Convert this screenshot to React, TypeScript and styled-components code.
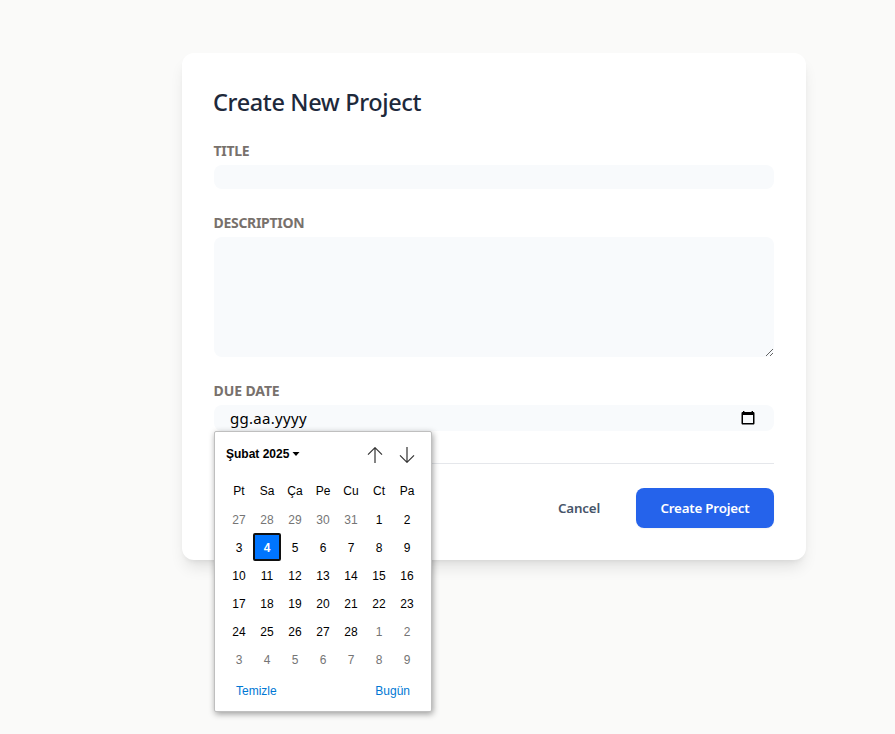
import React from 'react';
import styled, { createGlobalStyle } from 'styled-components';

const GlobalStyle = createGlobalStyle`
  * { box-sizing: border-box; }
  body {
    margin: 0;
    background: #fafaf9;
    font-family: "Segoe UI", "Noto Sans", "Open Sans", sans-serif;
    overflow: hidden;
  }
`;

const Page = styled.main`
  height: 734px;
  padding: 53px 89px 0 182px;
`;

const Card = styled.form`
  height: 507px;
  padding: 32px;
  border-radius: 12px;
  background: #fff;
  box-shadow: 0 10px 15px -3px rgba(0, 0, 0, 0.1), 0 4px 6px -4px rgba(0, 0, 0, 0.1);
`;

const Heading = styled.h2`
  margin: 0 0 22px -1px;
  color: #1e293b;
  font-size: 23.5px;
  font-weight: 500;
  line-height: 34px;
  letter-spacing: -0.37px;
  white-space: nowrap;
`;

const Field = styled.div<{ $gap: number }>`
  position: relative;
  margin-bottom: ${(p) => p.$gap}px;
`;

const Label = styled.label<{ $tracking: number }>`
  display: block;
  margin: 0 0 4px -0.5px;
  color: #78716c;
  font-size: 14px;
  font-weight: 700;
  line-height: 20px;
  letter-spacing: ${(p) => p.$tracking}px;
  text-transform: uppercase;
`;

const TextInput = styled.input`
  display: block;
  width: 100%;
  height: 24px;
  padding: 0 16px;
  border: 0;
  border-radius: 8px;
  background: #f8fafc;
  font: inherit;
`;

const TextArea = styled.textarea`
  display: block;
  width: 100%;
  height: 120px;
  padding: 12px 16px;
  border: 0;
  border-radius: 8px;
  background: #f8fafc;
  font: inherit;
  resize: vertical;
`;

const DateInput = styled.div`
  display: flex;
  align-items: center;
  justify-content: space-between;
  height: 26px;
  padding: 0 18px 0 16px;
  border-radius: 8px;
  background: #f8fafc;
  color: #000;
  font-size: 15px;
  line-height: 28px;
`;

const DateText = styled.span`
  letter-spacing: 0.3px;
`;

const Actions = styled.footer`
  display: flex;
  justify-content: flex-end;
  padding-top: 24px;
  border-top: 1px solid #e5e7eb;
`;

const Button = styled.button<{ $primary?: boolean }>`
  height: 40px;
  width: ${(p) => (p.$primary ? 138 : 90)}px;
  margin-left: ${(p) => (p.$primary ? 12 : 0)}px;
  padding: 0 0 1px;
  border: 0;
  border-radius: 8px;
  background: ${(p) => (p.$primary ? '#2563eb' : 'transparent')};
  box-shadow: ${(p) => (p.$primary ? '0 1px 2px rgba(0, 0, 0, 0.05)' : 'none')};
  color: ${(p) => (p.$primary ? '#fff' : '#475569')};
  font-family: inherit;
  font-size: 13.3333px;
  font-weight: 600;
  letter-spacing: ${(p) => (p.$primary ? -0.2 : -0.15)}px;
  white-space: nowrap;
`;

const Picker = styled.section`
  position: absolute;
  z-index: 2;
  top: 50px;
  left: 0;
  width: 218px;
  height: 281px;
  padding: 0 10px;
  border: 1px solid #bfbfbf;
  border-radius: 2px;
  background: #fff;
  box-shadow: 1px 2px 6px rgba(0, 0, 0, 0.38);
  color: #000;
  font: 12px/28px "Liberation Sans", Arial, sans-serif;
`;

const MonthBar = styled.header`
  display: flex;
  align-items: center;
  height: 45px;
  padding: 0 6px 0 1px;
`;

const MonthName = styled.strong`
  display: flex;
  flex: 1;
  align-items: center;
  gap: 3px;
  padding-bottom: 2px;
`;

const Arrows = styled.div`
  display: flex;
  gap: 16px;
`;

const DayGrid = styled.div`
  display: grid;
  grid-template-columns: repeat(7, 28px);
  grid-template-rows: 29px repeat(6, 28px);
  text-align: center;
`;

const Day = styled.span<{ $muted?: boolean; $selected?: boolean }>`
  color: ${(p) => (p.$selected ? '#fff' : p.$muted ? '#757575' : '#000')};
  border-radius: 2px;
  ${(p) =>
    p.$selected &&
    `margin: -1px 0 1px;
     border: 2px solid #101010;
     background: #0075ff;
     font-weight: 700;
     line-height: 26px;`}
`;

const Links = styled.div`
  display: flex;
  justify-content: space-between;
  padding: 3px 11px 0 11px;
  color: #0078d4;
`;

const CalendarIcon = () => (
  <svg width="16" height="16" viewBox="0 0 16 16" aria-hidden="true">
    <path
      fill="#000"
      fillRule="evenodd"
      d="M3 1h1.4v1h7.2V1H13v1h.2c.8 0 1.3.5 1.3 1.3v9.9c0 .8-.5 1.3-1.3 1.3H2.8c-.8 0-1.3-.5-1.3-1.3V3.300c0-.8.5-1.3 1.3-1.3H3zM3 5v8h10V5z"
    />
  </svg>
);

const Arrow = ({ down }: { down?: boolean }) => (
  <svg width="16" height="16" viewBox="0 0 16 16" fill="none" stroke="#333" aria-hidden="true">
    <path d={down ? 'M8 0v15.3M1 8.3l7 7 7-7' : 'M8 16V.7M1 7.7l7-7 7 7'} strokeWidth="1.2" />
  </svg>
);

const weekdays = ['Pt', 'Sa', 'Ça', 'Pe', 'Cu', 'Ct', 'Pa'];
const firstDay = new Date(2025, 0, 27);
const days = Array.from({ length: 42 }, (_, i) => {
  const date = new Date(firstDay);
  date.setDate(date.getDate() + i);
  return { number: date.getDate(), inMonth: date.getMonth() === 1 };
});

const DatePicker = () => (
  <Picker>
    <MonthBar>
      <MonthName>
        Şubat 2025
        <svg width="8" height="4" viewBox="0 0 8 4" aria-hidden="true">
          <path d="M.5 0h7L4 4z" />
        </svg>
      </MonthName>
      <Arrows>
        <Arrow />
        <Arrow down />
      </Arrows>
    </MonthBar>
    <DayGrid>
      {weekdays.map((name) => (
        <Day key={name}>{name}</Day>
      ))}
      {days.map((day, i) => (
        <Day key={i} $muted={!day.inMonth} $selected={day.inMonth && day.number === 4}>
          {day.number}
        </Day>
      ))}
    </DayGrid>
    <Links>
      <span>Temizle</span>
      <span>Bugün</span>
    </Links>
  </Picker>
);

export default function App() {
  return (
    <>
      <GlobalStyle />
      <Page>
        <Card>
          <Heading>Create New Project</Heading>
          <Field $gap={24}>
            <Label $tracking={-0.3} htmlFor="title">Title</Label>
            <TextInput id="title" />
          </Field>
          <Field $gap={24}>
            <Label $tracking={-0.3} htmlFor="description">Description</Label>
            <TextArea id="description" />
          </Field>
          <Field $gap={32}>
            <Label $tracking={-0.1}>Due Date</Label>
            <DateInput>
              <DateText>gg.aa.yyyy</DateText>
              <CalendarIcon />
            </DateInput>
            <DatePicker />
          </Field>
          <Actions>
            <Button type="button">Cancel</Button>
            <Button type="button" $primary>Create Project</Button>
          </Actions>
        </Card>
      </Page>
    </>
  );
}
